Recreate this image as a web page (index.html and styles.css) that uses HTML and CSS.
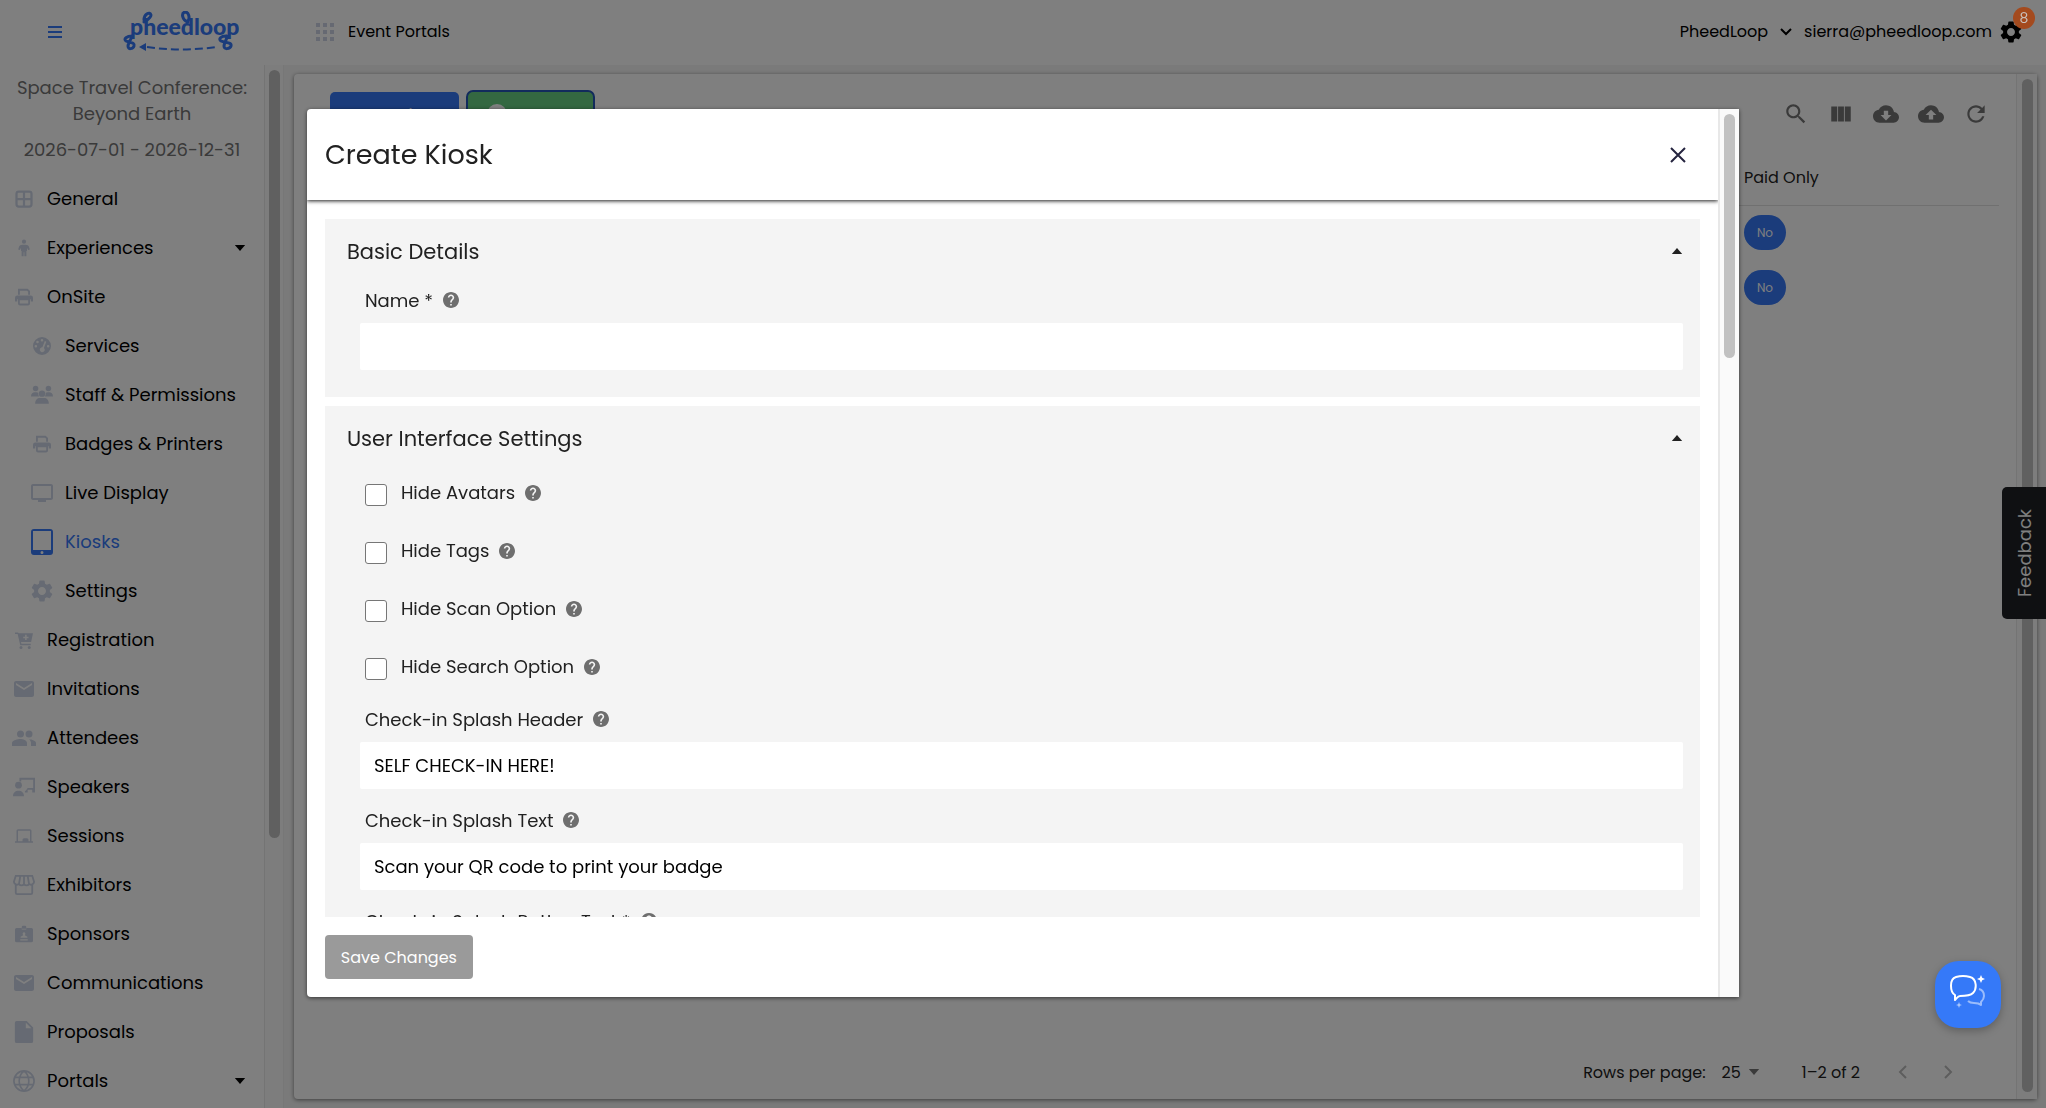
FILE: index.html
```html
<!DOCTYPE html>
<html lang="en">
<head>
<meta charset="UTF-8" />
<meta name="viewport" content="width=device-width, initial-scale=1.0" />
<title>Kiosks</title>
<link rel="stylesheet" href="styles.css">
</head>
<body>
  <svg class="sprite" aria-hidden="true">
    <symbol id="i-grid" viewBox="0 0 24 24"><path fill="none" stroke="currentColor" stroke-width="3" d="M5 2h14a3 3 0 0 1 3 3v14a3 3 0 0 1-3 3H5a3 3 0 0 1-3-3V5a3 3 0 0 1 3-3zM12 3v18M3 12h18"/></symbol>
    <symbol id="i-person" viewBox="0 0 24 24"><circle cx="12" cy="3.500" r="2.800"/><path d="M9.500 7.500h5c2 0 3.300 1 4 2.500l1.300 4-2.300.8-1.500-3v4.200h-.8V23h-2.700v-5.500h-1V23H8.800v-7H8v-4.200l-1.500 3-2.300-.8 1.300-4c.7-1.500 2-2.500 4-2.500z"/></symbol>
    <symbol id="i-printer" viewBox="0 0 24 24"><path d="M4 1h13l3 3v5h-2.500V5L16 3.500H6.500V9H4zM3 10h18a3 3 0 0 1 3 3v5h-3v-3H3v3H0v-5a3 3 0 0 1 3-3z"/><path fill="none" stroke="currentColor" stroke-width="2.400" d="M5.200 15h13.600v5.500a1.500 1.500 0 0 1-1.500 1.500H6.700a1.500 1.500 0 0 1-1.500-1.500z"/></symbol>
    <symbol id="i-gauge" viewBox="0 0 24 24"><path fill-rule="evenodd" d="M12 0a12 12 0 1 0 0 24 12 12 0 0 0 0-24zM12 2.500a1.700 1.700 0 1 1 0 3.400 1.700 1.700 0 0 1 0-3.400zM6 5a1.700 1.700 0 1 1 0 3.400A1.700 1.700 0 0 1 6 5zM3.800 10.500a1.700 1.700 0 1 1 0 3.400 1.700 1.700 0 0 1 0-3.400zM20.200 10.500a1.700 1.700 0 1 1 0 3.400 1.700 1.700 0 0 1 0-3.400zM15.800 5.400l1.900.8-3.200 8.300a3.300 3.300 0 1 1-2-.8z"/></symbol>
    <symbol id="i-group" viewBox="0 0 24 24"><circle cx="5" cy="5" r="3"/><circle cx="19" cy="5" r="3"/><circle cx="12" cy="10.500" r="3.500"/><path d="M0 13.500C0 10.500 2 9 4 9h2c.7 0 1.400.2 2 .6-.3 1.600.1 3 1.100 3.900zM24 13.500C24 10.500 22 9 20 9h-2c-.7 0-1.400.2-2 .6.3 1.600-.1 3-1.100 3.900zM4.500 21.500c0-4 2.500-6.200 5-6.200h5c2.500 0 5 2.200 5 6.200z"/></symbol>
    <symbol id="i-tv" viewBox="0 0 24 24"><path d="M21 3H3c-1.100 0-2 .9-2 2v12c0 1.100.9 2 2 2h5v2h8v-2h5c1.100 0 2-.9 2-2V5c0-1.100-.9-2-2-2zm0 14H3V5h18v12z"/></symbol>
    <symbol id="i-tablet" viewBox="0 0 22 26"><path fill-rule="evenodd" d="M3 0h16a3 3 0 0 1 3 3v20a3 3 0 0 1-3 3H3a3 3 0 0 1-3-3V3a3 3 0 0 1 3-3zm-1 2v19h18V2zM11 22a1.500 1.500 0 1 0 0 3 1.500 1.500 0 0 0 0-3z"/></symbol>
    <symbol id="i-gear" viewBox="2 2 20 20"><path d="M19.140 12.940c.04-.3.060-.610.060-.940 0-.320-.020-.640-.070-.940l2.030-1.580c.180-.140.230-.410.120-.610l-1.920-3.320c-.120-.220-.370-.290-.590-.220l-2.390.960c-.5-.380-1.030-.7-1.620-.940l-.360-2.540c-.040-.240-.240-.410-.480-.410h-3.840c-.240 0-.430.170-.470.410l-.360 2.540c-.590.240-1.130.570-1.620.940l-2.390-.960c-.220-.080-.470 0-.590.220L2.740 8.870c-.120.210-.080.470.120.610l2.030 1.580c-.050.3-.090.630-.090.940s.020.640.070.940l-2.030 1.580c-.180.140-.230.410-.120.610l1.920 3.320c.120.220.370.290.590.220l2.390-.960c.5.380 1.030.7 1.620.940l.360 2.540c.050.240.240.410.480.410h3.840c.240 0 .440-.170.470-.410l.360-2.540c.590-.240 1.130-.560 1.620-.940l2.390.960c.220.080.470 0 .590-.220l1.920-3.320c.120-.220.070-.470-.120-.610l-2.010-1.580zM12 15.600c-1.980 0-3.600-1.620-3.600-3.600s1.620-3.600 3.600-3.600 3.600 1.620 3.600 3.600-1.620 3.600-3.600 3.600z"/></symbol>
    <symbol id="i-cart" viewBox="0 0 24 24"><path fill-rule="evenodd" d="M0 2h4l1 1h19l-2.500 11.500H8l.5 2.500H21v2H7L3.500 4H0zm13.500 3v2.500H11v2h2.500V12h2V9.500H18v-2h-2.500V5z"/><circle cx="8" cy="22" r="2"/><circle cx="19" cy="22" r="2"/></symbol>
    <symbol id="i-mail" viewBox="0 0 24 24"><path d="M20 4H4c-1.100 0-2 .9-2 2v12c0 1.100.9 2 2 2h16c1.100 0 2-.9 2-2V6c0-1.100-.9-2-2-2zm0 4l-8 5-8-5V6l8 5 8-5v2z"/></symbol>
    <symbol id="i-people" viewBox="0 0 24 24"><circle cx="8.500" cy="8" r="3.500"/><circle cx="17" cy="8" r="3.500"/><path d="M8.500 13C6 13 0 14.300 0 17v3h15v-3c0-2.700-4-4-6.500-4zM17 13.200c1.200 1 2 2.300 2 3.800v3h5v-3c0-2.200-3.800-3.600-7-3.800z"/></symbol>
    <symbol id="i-teacher" viewBox="0 0 24 24"><circle cx="6" cy="10" r="3.700"/><path d="M0 22c0-4 2.500-6 6-6s6 2 6 6zM7 2h17v16h-3v-3h-5v3h-3v-2h1l2-3h6V4H9v2H7z"/></symbol>
    <symbol id="i-board" viewBox="0 0 24 24"><path d="M4 3h16a2 2 0 0 1 2 2v14h2v2H0v-2h2V5a2 2 0 0 1 2-2zm0 2v14h6v-2a2 2 0 0 1 2-2h4a2 2 0 0 1 2 2v2h2V5z" fill-rule="evenodd"/></symbol>
    <symbol id="i-store" viewBox="0 0 24 24"><path fill="none" stroke="currentColor" stroke-width="2" d="M3 2h18l2 6.500a3.500 3.500 0 0 1-5.500 2.500 3.500 3.500 0 0 1-5.500 0 3.500 3.500 0 0 1-5.500 0A3.500 3.500 0 0 1 1 8.500zM6.500 11L8 2M12 11V2M17.500 11L16 2M3 12v8.500A1.500 1.500 0 0 0 4.500 22h15a1.500 1.500 0 0 0 1.500-1.500V12"/></symbol>
    <symbol id="i-badge" viewBox="0 0 24 24"><path fill-rule="evenodd" d="M2 4h7v2h6V4h7a2 2 0 0 1 2 2v15a2 2 0 0 1-2 2H2a2 2 0 0 1-2-2V6a2 2 0 0 1 2-2zm10 5l-2 2.500 1 2-3.500 2V17h9v-1.500l-3.500-2 1-2zM7 19v1.500h10V19z"/><path d="M10.500 1h3A1.500 1.500 0 0 1 15 2.500V5H9V2.500A1.500 1.500 0 0 1 10.500 1z"/></symbol>
    <symbol id="i-file" viewBox="0 0 20 24"><path fill-rule="evenodd" d="M2 0h11l7 7v15a2 2 0 0 1-2 2H2a2 2 0 0 1-2-2V2a2 2 0 0 1 2-2zm10 2v6h6z"/></symbol>
    <symbol id="i-globe" viewBox="0 0 24 24"><path fill="none" stroke="currentColor" stroke-width="1.800" d="M12 1a11 11 0 1 0 0 22 11 11 0 0 0 0-22zM12 1c-7 6-7 16 0 22M12 1c7 6 7 16 0 22M2 8h20M2 16h20"/></symbol>
    <symbol id="i-down" viewBox="0 0 12 7"><path d="M0 0h12L6 7z"/></symbol>
    <symbol id="i-up" viewBox="0 0 12 7"><path d="M0 7h12L6 0z"/></symbol>
    <symbol id="i-help" viewBox="2 2 20 20"><path d="M12 2C6.480 2 2 6.480 2 12s4.480 10 10 10 10-4.480 10-10S17.520 2 12 2zm1 17h-2v-2h2v2zm2.070-7.750l-.9.920C13.450 12.900 13 13.500 13 15h-2v-.5c0-1.100.450-2.100 1.170-2.830l1.240-1.260c.370-.360.590-.860.590-1.410 0-1.100-.9-2-2-2s-2 .9-2 2H8c0-2.210 1.790-4 4-4s4 1.790 4 4c0 .880-.360 1.680-.930 2.250z"/></symbol>
    <symbol id="i-search" viewBox="0 0 24 24"><path d="M15.500 14h-.790l-.280-.270C15.410 12.590 16 11.110 16 9.500 16 5.910 13.090 3 9.500 3S3 5.910 3 9.500 5.910 16 9.500 16c1.610 0 3.090-.590 4.230-1.570l.270.280v.790l5 4.990L20.490 19l-4.990-5zm-6 0C7.010 14 5 11.990 5 9.500S7.010 5 9.500 5 14 7.010 14 9.500 11.990 14 9.500 14z"/></symbol>
    <symbol id="i-columns" viewBox="0 0 24 24"><path d="M3 5h5.500v14H3zM9.300 5h5.400v14H9.300zM15.500 5H21v14h-5.500z"/></symbol>
    <symbol id="i-cloud-down" viewBox="0 0 24 24"><path d="M19.350 10.040C18.670 6.590 15.640 4 12 4 9.110 4 6.600 5.640 5.350 8.040 2.340 8.360 0 10.910 0 14c0 3.310 2.690 6 6 6h13c2.760 0 5-2.240 5-5 0-2.640-2.050-4.780-4.650-4.960zM17 13l-5 5-5-5h3V9h4v4h3z"/></symbol>
    <symbol id="i-cloud-up" viewBox="0 0 24 24"><path d="M19.350 10.040C18.670 6.590 15.640 4 12 4 9.110 4 6.600 5.640 5.350 8.040 2.340 8.360 0 10.910 0 14c0 3.310 2.690 6 6 6h13c2.760 0 5-2.240 5-5 0-2.640-2.050-4.780-4.650-4.960zM14 13v4h-4v-4H7l5-5 5 5h-3z"/></symbol>
    <symbol id="i-refresh" viewBox="0 0 24 24"><path d="M17.650 6.350C16.200 4.900 14.210 4 12 4c-4.420 0-7.990 3.580-7.990 8s3.570 8 7.990 8c3.730 0 6.840-2.550 7.730-6h-2.080c-.820 2.330-3.040 4-5.650 4-3.310 0-6-2.690-6-6s2.690-6 6-6c1.660 0 3.140.690 4.220 1.780L13 11h7V4l-2.350 2.350z"/></symbol>
  </svg>

  <header class="topbar">
    <div class="topbar-left">
      <button class="icon-btn menu-btn" aria-label="Toggle menu">
        <svg width="16" height="14" viewBox="0 0 16 14"><path stroke="currentColor" stroke-width="2" d="M1 2h14M1 7h14M1 12h14"/></svg>
      </button>
      <a class="logo" href="#" aria-label="Home">
        <svg width="116" height="42" viewBox="0 0 116 42">
          <text class="logo-text" x="7" y="24">pheedloop</text>
          <g fill="none" stroke="currentColor" stroke-width="3" stroke-linecap="round">
            <path d="M9 25c-5 0-9 3-6 5 4 2 9 1 8 5-1 3-6 4-6 0 0-3 3-6 4-10"/>
            <path d="M103 25c-5 0-8 3-5 5 4 2 11 1 10 5-1 3-7 4-7 0 0-3 3-6 3-10"/>
            <path d="M21 9c0-6 6-9 7-5 0 3-4 5-7 7M65 11c-6-2-7-9-3-10 4 0 5 6 3 9"/>
            <path stroke-width="2" stroke-linecap="butt" stroke-dasharray="8 4" d="M24 36q34 5 69 0"/>
          </g>
          <path d="M16 36l7-4v8z" fill="currentColor"/>
        </svg>
      </a>
      <a class="portals" href="#">
        <svg width="18" height="18" viewBox="0 0 18 18"><path d="M0 0h4v4H0zM7 0h4v4H7zM14 0h4v4h-4zM0 7h4v4H0zM7 7h4v4H7zM14 7h4v4h-4zM0 14h4v4H0zM7 14h4v4H7zM14 14h4v4h-4z"/></svg>
        Event Portals
      </a>
    </div>
    <div class="topbar-right">
      <button class="org-btn">PheedLoop
        <svg width="12" height="8" viewBox="0 0 12 8"><path fill="none" stroke="currentColor" stroke-width="2" d="M1 1l5 5 5-5"/></svg>
      </button>
      <span>sierra@pheedloop.com</span>
      <button class="icon-btn account-btn" aria-label="Account settings">
        <svg width="22" height="22"><use href="#i-gear"/></svg>
        <span class="count">8</span>
      </button>
    </div>
  </header>

  <div class="layout">
    <aside class="sidebar">
      <div class="sidebar-content">
        <div class="event-info">
          <p>Space Travel Conference: Beyond Earth</p>
          <p>2026-07-01 - 2026-12-31</p>
        </div>
        <nav class="side-nav">
          <a href="#"><svg class="ico-sm"><use href="#i-grid"/></svg>General</a>
          <a href="#"><svg class="ico-sm"><use href="#i-person"/></svg>Experiences<svg class="caret"><use href="#i-down"/></svg></a>
          <a href="#"><svg class="ico-sm"><use href="#i-printer"/></svg>OnSite</a>
          <a class="sub" href="#"><svg class="ico-sm"><use href="#i-gauge"/></svg>Services</a>
          <a class="sub" href="#"><svg><use href="#i-group"/></svg>Staff &amp; Permissions</a>
          <a class="sub" href="#"><svg class="ico-sm"><use href="#i-printer"/></svg>Badges &amp; Printers</a>
          <a class="sub" href="#"><svg class="ico-lg"><use href="#i-tv"/></svg>Live Display</a>
          <a class="sub active" href="#"><svg class="ico-lg"><use href="#i-tablet"/></svg>Kiosks</a>
          <a class="sub" href="#"><svg><use href="#i-gear"/></svg>Settings</a>
          <a href="#"><svg class="ico-sm"><use href="#i-cart"/></svg>Registration</a>
          <a href="#"><svg class="ico-lg"><use href="#i-mail"/></svg>Invitations</a>
          <a href="#"><svg class="ico-lg"><use href="#i-people"/></svg>Attendees</a>
          <a href="#"><svg><use href="#i-teacher"/></svg>Speakers</a>
          <a href="#"><svg class="ico-sm"><use href="#i-board"/></svg>Sessions</a>
          <a href="#"><svg><use href="#i-store"/></svg>Exhibitors</a>
          <a href="#"><svg class="ico-sm"><use href="#i-badge"/></svg>Sponsors</a>
          <a href="#"><svg class="ico-lg"><use href="#i-mail"/></svg>Communications</a>
          <a href="#"><svg><use href="#i-file"/></svg>Proposals</a>
          <a href="#"><svg><use href="#i-globe"/></svg>Portals<svg class="caret"><use href="#i-down"/></svg></a>
        </nav>
      </div>
      <div class="scrollbar side-scroll"><div class="thumb"></div></div>
    </aside>

    <main class="main">
      <div class="card">
        <div class="card-content">
          <div class="toolbar">
            <div class="actions">
              <button class="btn btn-blue">Action</button>
              <button class="btn btn-green">
                <svg width="20" height="20" viewBox="0 0 20 20"><path fill-rule="evenodd" d="M10 0a10 10 0 1 0 0 20 10 10 0 0 0 0-20zM9 5h2v4h4v2h-4v4H9v-4H5V9h4z"/></svg>
                Create
              </button>
            </div>
            <div class="tools">
              <button class="icon-btn" aria-label="Search"><svg><use href="#i-search"/></svg></button>
              <button class="icon-btn" aria-label="View columns"><svg><use href="#i-columns"/></svg></button>
              <button class="icon-btn" aria-label="Download"><svg><use href="#i-cloud-down"/></svg></button>
              <button class="icon-btn" aria-label="Upload"><svg><use href="#i-cloud-up"/></svg></button>
              <button class="icon-btn" aria-label="Refresh"><svg><use href="#i-refresh"/></svg></button>
            </div>
          </div>
          <table class="kiosks">
            <thead>
              <tr><td></td><th>Paid Only</th></tr>
            </thead>
            <tbody>
              <tr><td></td><td><span class="chip">No</span></td></tr>
              <tr><td></td><td><span class="chip">No</span></td></tr>
            </tbody>
          </table>
          <div class="pagination">
            <label for="rows">Rows per page:</label>
            <div class="select">
              <select id="rows"><option>25</option></select>
              <svg class="caret"><use href="#i-down"/></svg>
            </div>
            <span class="range">1–2 of 2</span>
            <button class="icon-btn" aria-label="Previous page" disabled><svg width="10" height="14" viewBox="0 0 10 14"><path fill="none" stroke="currentColor" stroke-width="2" d="M8 1L2 7l6 6"/></svg></button>
            <button class="icon-btn" aria-label="Next page" disabled><svg width="10" height="14" viewBox="0 0 10 14"><path fill="none" stroke="currentColor" stroke-width="2" d="M2 1l6 6-6 6"/></svg></button>
          </div>
        </div>
        <div class="scrollbar card-scroll"><div class="thumb"></div></div>
      </div>
    </main>
  </div>

  <button class="feedback">Feedback</button>

  <div class="overlay">
    <div class="modal" role="dialog" aria-labelledby="modal-title">
      <form class="modal-main">
        <div class="modal-header">
          <h2 id="modal-title">Create Kiosk</h2>
          <button type="button" class="icon-btn close-btn" aria-label="Close">
            <svg width="18" height="18" viewBox="0 0 18 18"><path stroke="currentColor" stroke-width="2" d="M2 2l14 14M16 2L2 16"/></svg>
          </button>
        </div>
        <div class="modal-body">
          <section class="panel">
            <h3>Basic Details <svg class="caret"><use href="#i-up"/></svg></h3>
            <div class="field">
              <label for="name">Name * <svg class="help"><use href="#i-help"/></svg></label>
              <input type="text" id="name" name="name" />
            </div>
          </section>
          <section class="panel">
            <h3>User Interface Settings <svg class="caret"><use href="#i-up"/></svg></h3>
            <div class="check">
              <input type="checkbox" id="avatars" />
              <label for="avatars">Hide Avatars <svg class="help"><use href="#i-help"/></svg></label>
            </div>
            <div class="check">
              <input type="checkbox" id="tags" />
              <label for="tags">Hide Tags <svg class="help"><use href="#i-help"/></svg></label>
            </div>
            <div class="check">
              <input type="checkbox" id="scan" />
              <label for="scan">Hide Scan Option <svg class="help"><use href="#i-help"/></svg></label>
            </div>
            <div class="check">
              <input type="checkbox" id="search" />
              <label for="search">Hide Search Option <svg class="help"><use href="#i-help"/></svg></label>
            </div>
            <div class="field">
              <label for="splash-header">Check-in Splash Header <svg class="help"><use href="#i-help"/></svg></label>
              <input type="text" id="splash-header" value="SELF CHECK-IN HERE!" />
            </div>
            <div class="field">
              <label for="splash-text">Check-in Splash Text <svg class="help"><use href="#i-help"/></svg></label>
              <input type="text" id="splash-text" value="Scan your QR code to print your badge" />
            </div>
            <div class="field">
              <label for="splash-button">Check-in Splash Button Text * <svg class="help"><use href="#i-help"/></svg></label>
              <input type="text" id="splash-button" />
            </div>
          </section>
        </div>
        <div class="modal-footer">
          <button type="submit" class="save-btn" disabled>Save Changes</button>
        </div>
      </form>
      <div class="scrollbar modal-scroll"><div class="thumb"></div></div>
    </div>
  </div>

  <button class="chat" aria-label="Open chat">
    <svg width="38" height="34" viewBox="0 0 38 34">
      <g fill="none" stroke="#fff" stroke-width="2" stroke-linejoin="round">
        <path d="M6 21C1 18 0 5 7 3q7-2 14 0c7 2 7 12 3 16-3 3-9 3-13 3-2 0-3 2-5 4z"/>
        <path stroke-opacity=".5" d="M30 15c4 1 5 3 5 7 0 3-1 4-3 6v3c-2-2-4-2-7-2-3 0-5-1-6-2"/>
      </g>
      <path fill="#fff" d="M32 1l1.200 2.800L36 5l-2.800 1.200L32 9l-1.200-2.800L28 5l2.800-1.200z"/>
      <path fill="#fff" fill-opacity=".6" d="M10 28l.8 2.200L13 31l-2.200.8L10 34l-.8-2.200L7 31l2.200-.8z"/>
    </svg>
  </button>
</body>
</html>
```
FILE: styles.css
```css
* {
  box-sizing: border-box;
}

body {
  margin: 0;
  height: 100vh;
  display: flex;
  flex-direction: column;
  overflow: hidden;
  font-family: Poppins, Inter, sans-serif;
  font-size: 18px;
  color: #000;
  background-color: #f5f5f5;
}

button, input, select {
  font-family: inherit;
  font-size: inherit;
  color: inherit;
}

button {
  border: none;
  padding: 0;
  cursor: pointer;
}

a {
  color: inherit;
  text-decoration: none;
}

svg {
  fill: currentColor;
  flex-shrink: 0;
}

.sprite {
  display: none;
}

.icon-btn {
  display: flex;
  align-items: center;
  justify-content: center;
  background: none;
}

.caret {
  width: 12px;
  height: 6px;
}

/* scrollbars */
.scrollbar {
  flex-shrink: 0;
  background-color: #fafafa;
  border-left: 1px solid #e8e8e8;
}

.thumb {
  width: 11px;
  border-radius: 6px;
  background-color: #c1c1c1;
}

/* top bar */
.topbar {
  height: 65px;
  flex-shrink: 0;
  display: flex;
  justify-content: space-between;
  align-items: center;
  padding: 0 24px 2px 47px;
  font-size: 16px;
  background-color: #fff;
}

.topbar-left, .topbar-right {
  display: flex;
  align-items: center;
}

.menu-btn {
  color: #3678f6;
}

.logo {
  display: flex;
  margin: 0 77px 0 60px;
  color: #3678f6;
}

.logo-text {
  font-family: Lato, sans-serif;
  font-size: 23px;
  font-weight: 900;
}

.portals {
  display: flex;
  align-items: center;
  gap: 14px;
}

.portals svg {
  color: #cdd3e4;
}

.org-btn {
  display: flex;
  align-items: center;
  gap: 12px;
  margin-right: 12px;
  background: none;
}

.account-btn {
  position: relative;
  margin-left: 8px;
}

.count {
  position: absolute;
  z-index: 20;
  left: 13px;
  top: -14px;
  width: 22px;
  height: 22px;
  border-radius: 11px;
  font-size: 14px;
  line-height: 22px;
  color: #c9c0bc;
  background-color: #a44a1e;
}

/* sidebar */
.layout {
  flex: 1;
  min-height: 0;
  display: flex;
}

.sidebar {
  width: 283px;
  flex-shrink: 0;
  display: flex;
  background-color: #fff;
}

.sidebar-content {
  flex: 1;
  overflow: hidden;
}

.side-scroll {
  width: 19px;
  padding: 5px 0 0 4px;
}

.side-scroll .thumb {
  height: 74%;
}

.event-info {
  padding: 10px 8px 1px;
  line-height: 26px;
  text-align: center;
  color: #747474;
}

.event-info p {
  margin: 0 0 10px;
}

.side-nav a {
  display: flex;
  align-items: center;
  height: 49px;
  padding: 0 18px 0 12px;
}

.side-nav svg {
  width: 24px;
  height: 22px;
  margin-right: 11px;
  color: #cdd5e6;
}

.side-nav .ico-sm {
  height: 18px;
}

.side-nav .ico-lg {
  height: 26px;
}

.side-nav .sub {
  padding-left: 30px;
}

.side-nav .active, .side-nav .active svg {
  color: #3678f6;
}

.side-nav .caret {
  width: 12px;
  height: 6px;
  margin: 0 0 0 auto;
  color: #000;
}

/* main card */
.main {
  flex: 1;
  padding: 9px 9px 9px 10px;
  border-left: 1px solid #eee;
}

.card {
  height: 100%;
  display: flex;
  border-radius: 4px;
  background-color: #fff;
  box-shadow: 0 1px 4px rgba(0, 0, 0, 0.5);
}

.card-content {
  flex: 1;
  display: flex;
  flex-direction: column;
  padding: 16px 17px 3px 36px;
}

.card-scroll {
  width: 21px;
  padding: 5px 0 7px 5px;
}

.card-scroll .thumb {
  height: 100%;
}

.toolbar {
  display: flex;
  justify-content: space-between;
}

.actions {
  display: flex;
  align-items: flex-start;
  gap: 7px;
}

.btn {
  display: flex;
  align-items: center;
  justify-content: center;
  gap: 13px;
  width: 129px;
  height: 44px;
  margin-top: 2px;
  border-radius: 5px;
  font-size: 16px;
  color: #fff;
}

.btn-blue {
  padding-left: 26px;
  background-color: #3678f6;
}

.btn-green {
  height: 48px;
  margin-top: 0;
  border: 2px solid #2456b8;
  border-radius: 7px;
  background-color: #68d083;
}

.tools {
  display: flex;
  gap: 17px;
  margin-right: 9px;
  height: 48px;
  color: #757575;
}

.tools svg {
  width: 28px;
  height: 26px;
}

.kiosks {
  width: 100%;
  border-collapse: collapse;
  font-size: 16px;
}

.kiosks th, .kiosks td {
  height: 55px;
  padding: 0;
  text-align: left;
}

.kiosks th {
  width: 255px;
  padding-top: 12px;
  font-weight: 400;
  color: #212121;
}

.kiosks thead tr {
  height: 67px;
  border-bottom: 1px solid #e0e0e0;
}

.chip {
  display: inline-block;
  width: 42px;
  border-radius: 18px;
  font-size: 12px;
  line-height: 35px;
  text-align: center;
  color: #fff;
  background-color: #3678f6;
}

.pagination {
  display: flex;
  align-items: center;
  justify-content: flex-end;
  height: 48px;
  margin: auto 46px 0 0;
  font-size: 16px;
  color: #212121;
}

.select {
  display: flex;
  align-items: center;
  margin: 0 42px 0 16px;
}

.select select {
  appearance: none;
  border: none;
  padding: 0 6px 0 0;
  background: none;
}

.pagination .caret {
  color: #757575;
}

.pagination .icon-btn {
  width: 10px;
  margin-left: 35px;
  color: #bbb;
}

.pagination .range + .icon-btn {
  margin-left: 38px;
}

.feedback {
  position: fixed;
  right: 0;
  top: 487px;
  width: 44px;
  height: 132px;
  border-radius: 0 5px 5px 0;
  writing-mode: vertical-rl;
  transform: rotate(180deg);
  color: #fff;
  background-color: #1e2024;
}

/* create kiosk dialog */
.overlay {
  position: fixed;
  inset: 0;
  z-index: 10;
  display: flex;
  align-items: center;
  justify-content: center;
  padding-bottom: 2px;
  background-color: rgba(0, 0, 0, 0.5);
}

.modal {
  width: 70%;
  height: calc(100vh - 220px);
  display: flex;
  overflow: hidden;
  border-radius: 4px 0 0 4px;
  color: #212121;
  background-color: #fff;
  box-shadow: 0 1px 4px rgba(0, 0, 0, 0.6);
}

.modal-main {
  flex: 1;
  display: flex;
  flex-direction: column;
}

.modal-header {
  display: flex;
  justify-content: space-between;
  align-items: center;
  height: 91px;
  flex-shrink: 0;
  padding: 0 31px 0 18px;
  box-shadow: 0 1px 4px rgba(0, 0, 0, 0.9);
}

.modal-header h2 {
  margin: 0;
  font-size: 27px;
  font-weight: 400;
}

.close-btn {
  color: #25243f;
}

.modal-body {
  flex: 1;
  overflow: hidden;
  padding: 0 18px;
  margin-top: 19px;
}

.modal-footer {
  padding: 18px;
}

.save-btn {
  width: 148px;
  height: 44px;
  border-radius: 4px;
  font-size: 16px;
  color: #fff;
  background-color: #9a9a9a;
}

.modal-scroll {
  width: 21px;
  padding: 5px 0 0 4px;
  border-left-width: 2px;
}

.modal-scroll .thumb {
  height: 244px;
}

.panel {
  padding: 0 17px 13px 22px;
  margin-bottom: 9px;
  background-color: #f4f4f4;
}

.panel h3 {
  display: flex;
  justify-content: space-between;
  align-items: center;
  height: 64px;
  margin: 0;
  font-size: 21px;
  font-weight: 400;
}

.field {
  padding: 0 0 14px 13px;
}

.field label {
  display: flex;
  align-items: center;
  gap: 10px;
  height: 34px;
  margin-bottom: 6px;
  padding-left: 5px;
}

.help {
  width: 16px;
  height: 16px;
  color: #6e6e6e;
}

.field input {
  display: block;
  width: 100%;
  height: 47px;
  padding: 0 14px;
  border: none;
  border-radius: 2px;
  color: #000;
  background-color: #fff;
}

.check {
  display: flex;
  align-items: center;
  gap: 14px;
  height: 58px;
  padding: 0 0 8px 18px;
}

.check input {
  appearance: none;
  width: 22px;
  height: 22px;
  margin: 0;
  border: 1px solid #767676;
  border-radius: 3px;
  background-color: #fff;
}

.check label {
  display: flex;
  align-items: center;
  gap: 10px;
  padding-bottom: 5px;
}

.chat {
  position: fixed;
  right: 45px;
  bottom: 80px;
  z-index: 20;
  width: 66px;
  height: 67px;
  border-radius: 24px;
  background-color: #3579f8;
  box-shadow: 0 3px 8px rgba(0, 0, 0, 0.25);
}
```
